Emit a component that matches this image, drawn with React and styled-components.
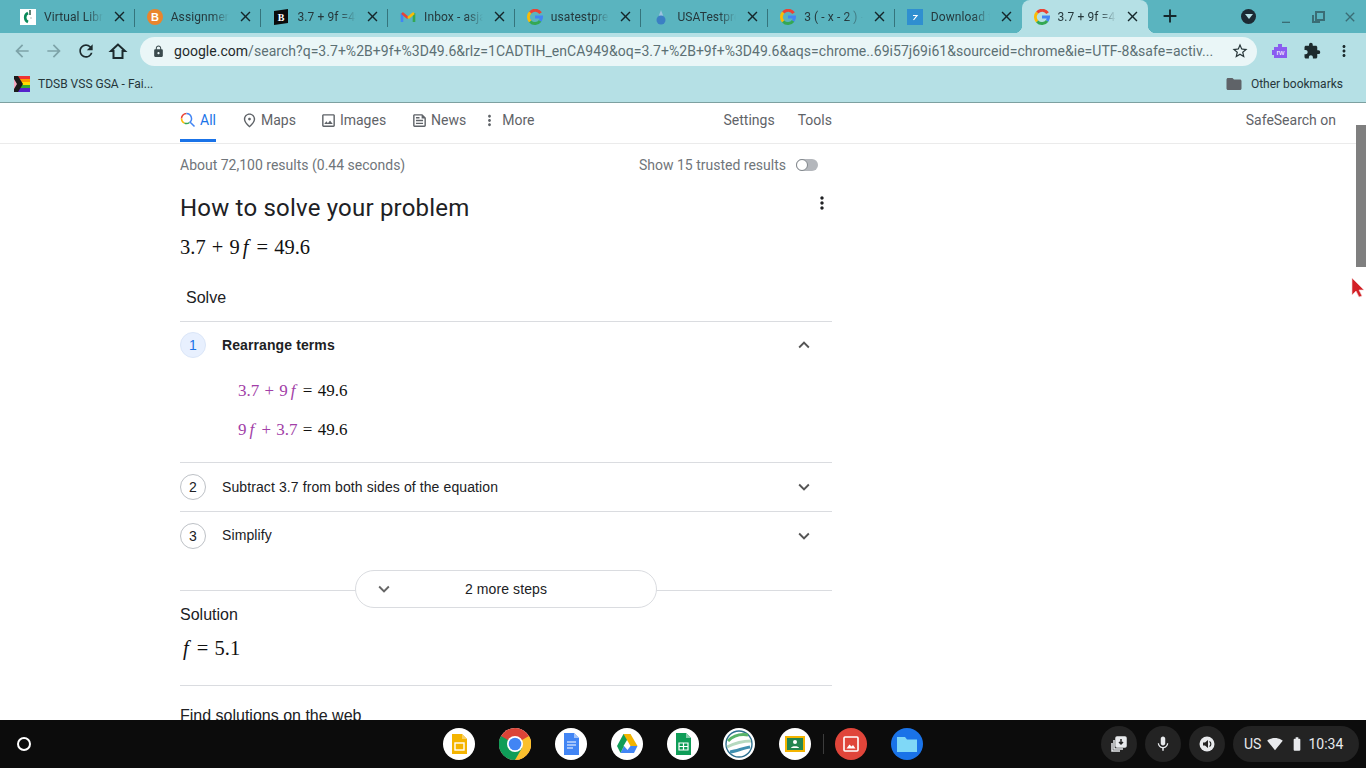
import styled, { createGlobalStyle } from 'styled-components';
import {
  MdArrowBack, MdArrowForward, MdRefresh, MdLock, MdStarBorder, MdExtension, MdMoreVert,
  MdFolder, MdClose, MdAdd, MdKeyboardArrowDown, MdKeyboardArrowUp, MdOutlinePlace,
  MdOutlineImage, MdOutlineFeed, MdMic, MdSignalWifi4Bar, MdBatteryStd, MdMinimize,
} from 'react-icons/md';

const GlobalStyle = createGlobalStyle`
  html, body { margin: 0; padding: 0; height: 100%; overflow: hidden; background: #fff; }
  body { font-family: Roboto, "Liberation Sans", sans-serif; }
`;

const Screen = styled.div`
  position: relative;
  display: flex;
  flex-direction: column;
  width: 1366px;
  height: 768px;
  overflow: hidden;
`;

/* ---- tab strip ---- */
const TabStrip = styled.div`
  display: flex;
  align-items: stretch;
  height: 33px;
  padding-left: 8px;
  background: #5ab4bf;
  flex: none;
`;
const Tab = styled.div`
  position: relative;
  display: flex;
  align-items: center;
  box-sizing: border-box;
  width: 126.7px;
  padding: 0 7px 0 12px;
  gap: 8px;
  color: #25383c;
  ${(p) => !p.$active && !p.$last && `
    &::after {
      content: '';
      position: absolute;
      right: 0;
      top: 9px;
      width: 1px;
      height: 18px;
      background: #35747c;
    }
  `}
  ${(p) => p.$active && `
    background: #b5e0e5;
    border-radius: 8px 8px 0 0;
    &::before, &::after {
      content: '';
      position: absolute;
      bottom: 0;
      width: 8px;
      height: 8px;
    }
    &::before { left: -8px; background: radial-gradient(circle at 0 0, transparent 8px, #b5e0e5 8.5px); }
    &::after { right: -8px; background: radial-gradient(circle at 100% 0, transparent 8px, #b5e0e5 8.5px); }
  `}
`;
const Favicon = styled.span`
  display: flex;
  width: 16px;
  height: 16px;
  flex: none;
`;
const TabTitle = styled.span`
  flex: 1;
  overflow: hidden;
  white-space: nowrap;
  font-size: 12px;
  letter-spacing: 0.1px;
  -webkit-mask-image: linear-gradient(90deg, #000 72%, transparent 100%);
  mask-image: linear-gradient(90deg, #000 72%, transparent 100%);
`;
const TabClose = styled(MdClose)`
  flex: none;
  width: 17px;
  height: 17px;
  color: #15272b;
`;
const NewTab = styled(MdAdd)`
  width: 22px;
  height: 22px;
  margin: 5px 0 0 11px;
  color: #15272b;
`;
const WindowControls = styled.div`
  display: flex;
  align-items: center;
  margin-left: auto;
  padding-right: 8px;
  gap: 16px;
  color: #3a6d75;
`;
const ProfileDot = styled.span`
  display: flex;
  align-items: center;
  justify-content: center;
  width: 15px;
  height: 15px;
  margin-right: 6px;
  border-radius: 50%;
  background: #1c2a33;
`;
const ProfileArrow = styled.span`
  width: 0;
  height: 0;
  border-left: 4px solid transparent;
  border-right: 4px solid transparent;
  border-top: 5px solid #b5e0e5;
`;

/* ---- toolbar ---- */
const Toolbar = styled.div`
  display: flex;
  align-items: center;
  height: 36px;
  padding-left: 12px;
  background: #b5e0e5;
  flex: none;
`;
const NavIcon = styled.span`
  display: flex;
  justify-content: center;
  width: 20px;
  margin-right: 12px;
  font-size: 20px;
  color: ${(p) => (p.$off ? '#7da3a8' : '#1c2a2d')};
`;
const AddressBar = styled.div`
  display: flex;
  align-items: center;
  box-sizing: border-box;
  width: 1117px;
  height: 29px;
  padding: 0 8px 0 12px;
  border-radius: 15px;
  background: #eaf6f7;
`;
const Url = styled.span`
  flex: 1;
  margin-left: 9px;
  overflow: hidden;
  white-space: nowrap;
  font-size: 14px;
  letter-spacing: 0.03px;
  color: #5c7074;
  b { font-weight: 400; color: #1f2a2c; }
`;
const ExtIcons = styled.div`
  display: flex;
  align-items: center;
  margin-left: 14px;
  gap: 14px;
  font-size: 18px;
  color: #1c2a2d;
`;
const ExtBadge = styled.span`
  display: flex;
  width: 18px;
  height: 18px;
`;

/* ---- bookmarks ---- */
const Bookmarks = styled.div`
  display: flex;
  align-items: center;
  justify-content: space-between;
  box-sizing: border-box;
  height: 34px;
  padding: 0 23px 4px 14px;
  background: #b5e0e5;
  border-bottom: 1px solid #7da0a0;
  font-size: 12px;
  color: #26363a;
  flex: none;
`;
const Bookmark = styled.span`
  display: flex;
  align-items: center;
  gap: 8px;
`;

/* ---- page ---- */
const Viewport = styled.div`
  display: flex;
  flex: 1;
  min-height: 0;
  background: #fff;
`;
const Page = styled.div`
  flex: 1;
  min-width: 0;
  overflow: hidden;
`;
const Scrollbar = styled.div`
  width: 10px;
  padding-top: 22px;
  flex: none;
`;
const Thumb = styled.div`
  height: 142px;
  background: #7f7f7f;
`;
const SearchNav = styled.div`
  display: flex;
  align-items: center;
  box-sizing: border-box;
  height: 41px;
  padding: 0 20px 6px 180px;
  border-bottom: 1px solid #ebebeb;
  font-size: 14px;
  color: #5f6368;
`;
const NavTab = styled.span`
  position: relative;
  display: flex;
  align-items: center;
  gap: ${(p) => p.$gap || 4}px;
  margin-right: ${(p) => p.$mr || 0}px;
  ${(p) => p.$push && 'margin-left: auto;'}
  color: ${(p) => (p.$active ? '#1a73e8' : '#5f6368')};
  svg { font-size: 17px; }
  ${(p) => p.$active && `
    &::after {
      content: '';
      position: absolute;
      left: 0;
      right: 0;
      bottom: -14px;
      height: 3px;
      background: #1a73e8;
    }
  `}
`;
const Column = styled.div`
  box-sizing: border-box;
  width: 652px;
  margin-left: 180px;
`;
const StatsRow = styled.div`
  display: flex;
  align-items: center;
  justify-content: space-between;
  box-sizing: border-box;
  height: 43px;
  padding: 0 14px 2px 0;
  font-size: 14px;
  color: #70757a;
`;
const Trusted = styled.span`
  display: flex;
  align-items: center;
  gap: 10px;
`;
const Toggle = styled.span`
  position: relative;
  width: 22px;
  height: 12px;
  border-radius: 6px;
  background: #b4b7bc;
  &::after {
    content: '';
    position: absolute;
    left: 0;
    top: 0;
    box-sizing: border-box;
    width: 12px;
    height: 12px;
    border-radius: 50%;
    border: 1px solid #80868b;
    background: #fff;
  }
`;
const TitleRow = styled.div`
  display: flex;
  align-items: flex-start;
  justify-content: space-between;
  height: 43px;
`;
const Title = styled.h2`
  margin: 0;
  padding-top: 6px;
  font-size: 24px;
  line-height: 30px;
  font-weight: 400;
  letter-spacing: 0.2px;
  color: #202124;
`;
const KebabIcon = styled(MdMoreVert)`
  width: 20px;
  height: 20px;
  margin: 6px 0 0;
  color: #202124;
`;
const Math = styled.div`
  display: flex;
  align-items: center;
  height: ${(p) => p.$h || 34}px;
  font-family: "Liberation Serif", "Times New Roman", serif;
  font-size: ${(p) => p.$size || 20.5}px;
  word-spacing: 1px;
  color: #111;
  white-space: pre;
  i { padding: 0 2px 0 3px; }
`;
const Hi = styled.span`
  color: #a23fa8;
`;
const SolveHead = styled.div`
  display: flex;
  align-items: center;
  box-sizing: border-box;
  height: 38px;
  margin: 14px 0 5px;
  padding: 2px 0 0 6px;
  font-family: "Liberation Sans", Arial, sans-serif;
  font-size: 16px;
  color: #202124;
`;
const Step = styled.div`
  display: flex;
  align-items: center;
  box-sizing: content-box;
  height: ${(p) => p.$h}px;
  border-top: 1px solid #dadce0;
  padding-right: 17px;
  font-family: "Liberation Sans", Arial, sans-serif;
  font-size: 14px;
  letter-spacing: 0.1px;
  color: #202124;
`;
const StepNum = styled.span`
  display: flex;
  align-items: center;
  justify-content: center;
  box-sizing: border-box;
  width: 26px;
  height: 26px;
  margin-right: 16px;
  border-radius: 50%;
  border: 1px solid ${(p) => (p.$open ? '#dbe6f8' : '#bdc1c6')};
  background: ${(p) => (p.$open ? '#e8f0fe' : '#fff')};
  color: ${(p) => (p.$open ? '#1a73e8' : '#202124')};
`;
const StepText = styled.span`
  flex: 1;
  padding-bottom: 1px;
  font-weight: ${(p) => (p.$open ? 700 : 400)};
`;
const Chevron = styled.span`
  display: flex;
  font-size: 22px;
  color: #555;
`;
const StepBody = styled.div`
  padding: 3px 0 13px 58px;
`;
const MoreSteps = styled.div`
  display: flex;
  align-items: flex-start;
  justify-content: center;
  height: 31px;
  margin-top: 11px;
  background: linear-gradient(#dadce0, #dadce0) 0 20px / 100% 1px no-repeat;
`;
const MorePill = styled.div`
  position: relative;
  display: flex;
  align-items: center;
  justify-content: center;
  box-sizing: border-box;
  flex: none;
  width: 302px;
  height: 38px;
  border: 1px solid #dadce0;
  border-radius: 19px;
  background: #fff;
  font-family: "Liberation Sans", Arial, sans-serif;
  font-size: 14px;
  letter-spacing: 0.1px;
  color: #202124;
`;
const PillChevron = styled(MdKeyboardArrowDown)`
  position: absolute;
  left: 17px;
  top: 7px;
  width: 22px;
  height: 22px;
  color: #666;
`;
const SectionLabel = styled.div`
  display: flex;
  align-items: center;
  box-sizing: border-box;
  height: ${(p) => p.$h}px;
  padding-top: 2px;
  font-family: "Liberation Sans", Arial, sans-serif;
  font-size: 16px;
  color: #202124;
`;
const Rule = styled.div`
  height: 1px;
  margin-top: ${(p) => p.$mt || 0}px;
  background: #dadce0;
`;

/* ---- shelf ---- */
const Shelf = styled.div`
  display: grid;
  grid-template-columns: 1fr auto 1fr;
  align-items: center;
  height: 48px;
  background: #0c0c0c;
  flex: none;
`;
const Launcher = styled.span`
  display: block;
  box-sizing: border-box;
  width: 14px;
  height: 14px;
  margin-left: 17px;
  border: 2px solid #fff;
  border-radius: 50%;
`;
const Apps = styled.div`
  display: flex;
  align-items: center;
  gap: 24px;
`;
const AppSlot = styled.div`
  position: relative;
  width: 32px;
  height: 32px;
  border-radius: 50%;
  background: ${(p) => p.$bg || '#fff'};
  ${(p) => p.$run && `
    &::after {
      content: '';
      position: absolute;
      left: 50%;
      bottom: -11px;
      width: ${p.$run === 'on' ? 10 : 6}px;
      height: 2px;
      margin-left: -${p.$run === 'on' ? 5 : 3}px;
      background: ${p.$run === 'on' ? '#fff' : '#9aa0a6'};
    }
  `}
  svg { display: block; width: 32px; height: 32px; }
`;
const ShelfDivider = styled.span`
  width: 1px;
  height: 20px;
  margin: 0 -12.5px;
  background: #3c3c3c;
`;
const Tray = styled.div`
  display: flex;
  align-items: center;
  justify-content: flex-end;
  gap: 8px;
  padding-right: 7px;
`;
const TrayButton = styled.span`
  display: flex;
  align-items: center;
  justify-content: center;
  width: 36px;
  height: 36px;
  border-radius: 50%;
  background: #232323;
  color: #e8eaed;
  font-size: 18px;
`;
const StatusPill = styled.span`
  display: flex;
  align-items: center;
  box-sizing: border-box;
  width: 126px;
  height: 36px;
  padding-left: 11px;
  gap: 6px;
  border-radius: 18px;
  background: #232323;
  color: #e8eaed;
  font-size: 14px;
  svg { font-size: 16px; flex: none; }
`;
const Clock = styled.span`
  margin-left: -3px;
`;
const Pointer = styled.svg`
  position: absolute;
  left: 1351px;
  top: 278px;
  width: 14px;
  height: 20px;
`;

const GoogleG = () => (
  <svg viewBox="0 0 16 16" width="16" height="16" fill="none" strokeWidth="3">
    <path d="M13.6 4.2A6.5 6.5 0 0 0 3.2 3.6" stroke="#ea4335" />
    <path d="M3.2 3.6a6.500 6.500 0 0 0 0 8.8" stroke="#fbbc05" />
    <path d="M3.2 12.400a6.500 6.500 0 0 0 10 -0.600" stroke="#34a853" />
    <path d="M13.200 11.800a6.500 6.500 0 0 0 1.300 -3.800H8" stroke="#4285f4" />
  </svg>
);

const tabs = [
  {
    title: 'Virtual Library',
    icon: (
      <svg viewBox="0 0 16 16" width="16" height="16" fill="none">
        <rect width="16" height="16" fill="#fff" />
        <path d="M8 4a5 5 0 0 0 0 9" stroke="#0a8a5a" strokeWidth="2.600" />
        <path d="M10 1v5" stroke="#1d4f3c" strokeWidth="1.400" />
        <circle cx="11" cy="9" r="1" fill="#c9d6d0" />
      </svg>
    ),
  },
  {
    title: 'Assignments',
    icon: (
      <svg viewBox="0 0 16 16" width="16" height="16">
        <circle cx="8" cy="8" r="8" fill="#e9852d" />
        <text x="8" y="12" fontSize="11" fontWeight="700" textAnchor="middle" fill="#fff" fontFamily="Liberation Sans">B</text>
      </svg>
    ),
  },
  {
    title: '3.7 + 9f =49.6',
    icon: (
      <svg viewBox="0 0 16 16" width="16" height="16">
        <path d="M1 2l14-2v14L1 16z" fill="#0b0b0b" />
        <text x="8" y="12" fontSize="10" fontWeight="700" textAnchor="middle" fill="#fff" fontFamily="Liberation Serif">B</text>
      </svg>
    ),
  },
  {
    title: 'Inbox - asjad',
    icon: (
      <svg viewBox="0 0 16 16" width="16" height="16" fill="none" strokeWidth="2.600">
        <path d="M2 13V4" stroke="#4285f4" />
        <path d="M14 13V4" stroke="#34a853" />
        <path d="M2 4l6 5" stroke="#ea4335" />
        <path d="M8 9l6-5" stroke="#fbbc05" />
      </svg>
    ),
  },
  { title: 'usatestprep', icon: <GoogleG /> },
  {
    title: 'USATestprep',
    icon: (
      <svg viewBox="0 0 16 16" width="16" height="16">
        <path d="M8 1c1 3 2 4 2 6H6c0-2 1-3 2-6z" fill="#9cc3df" />
        <circle cx="8" cy="11" r="4.500" fill="#3b7fc4" />
      </svg>
    ),
  },
  { title: '3 ( - x - 2 ) - 4', icon: <GoogleG /> },
  {
    title: 'Download file',
    icon: (
      <svg viewBox="0 0 16 16" width="16" height="16">
        <rect width="16" height="16" fill="#2f8fd0" />
        <path d="M6 6.500h4L6.500 11" fill="none" stroke="#fff" strokeWidth="1.200" />
      </svg>
    ),
  },
  { title: '3.7 + 9f =49.6', icon: <GoogleG />, active: true },
];

const SearchGlyph = () => (
  <svg viewBox="0 0 16 16" width="16" height="16" fill="none" strokeWidth="1.500">
    <path d="M6.500 1.500a5 5 0 0 0-5 5" stroke="#ea4335" />
    <path d="M1.500 6.500a5 5 0 0 0 3 4.600" stroke="#fbbc05" />
    <path d="M4.500 11.100a5 5 0 0 0 5-.600" stroke="#34a853" />
    <path d="M9.500 10.500a5 5 0 0 0-3-9M10 10l4.500 4.500" stroke="#4285f4" />
  </svg>
);

const RestoreGlyph = () => (
  <svg viewBox="0 0 16 16" width="16" height="16" fill="none" stroke="currentColor" strokeWidth="2">
    <path d="M6 3h8v8H6z" />
    <path d="M3 6v7h7" />
  </svg>
);

const HomeGlyph = () => (
  <svg viewBox="0 0 20 20" width="20" height="20" fill="none" stroke="currentColor" strokeWidth="2">
    <path d="M10 3.500L3 10h2.500v7h9v-7H17z" />
  </svg>
);

const PrideGlyph = () => (
  <svg viewBox="0 0 16 16" width="16" height="16">
    <rect y="0" width="16" height="3" fill="#e33" />
    <rect y="3" width="16" height="3" fill="#f90" />
    <rect y="6" width="16" height="3" fill="#fd0" />
    <rect y="9" width="16" height="3" fill="#3a3" />
    <rect y="12" width="16" height="4" fill="#52c" />
    <path d="M0 0h4l5 8-5 8H0z" fill="#1b1b1b" />
    <path d="M0 3l3 5-3 5z" fill="#f4a9c0" />
  </svg>
);

const SlidesIcon = () => (
  <svg viewBox="0 0 32 32">
    <path d="M9 6h10l5 5v15H9z" fill="#f4b400" />
    <path d="M19 6l5 5h-5z" fill="#f7cf66" />
    <rect x="12" y="15" width="9" height="7" fill="none" stroke="#fff" strokeWidth="1.400" />
  </svg>
);
const ChromeIcon = () => (
  <svg viewBox="0 0 32 32">
    <circle cx="16" cy="16" r="16" fill="#db4437" />
    <path d="M16 32A16 16 0 0 0 30 8l-14 8z" fill="#fbc02d" />
    <path d="M2 8a16 16 0 0 0 14 24l7-12-7-4z" fill="#0f9d58" />
    <circle cx="16" cy="16" r="8" fill="#fff" />
    <circle cx="16" cy="16" r="6.300" fill="#4285f4" />
  </svg>
);
const DocsIcon = () => (
  <svg viewBox="0 0 32 32">
    <path d="M9 5h10l5 5v17H9z" fill="#4285f4" />
    <path d="M19 5l5 5h-5z" fill="#a1c2fa" />
    <path d="M12 14h9M12 17h9M12 20h6" stroke="#fff" strokeWidth="1.200" />
  </svg>
);
const DriveIcon = () => (
  <svg viewBox="0 0 32 32">
    <path d="M12.500 6h7l-7 12H6z" fill="#0f9d58" />
    <path d="M12.500 6h7l7 12h-7z" fill="#f4b400" />
    <path d="M9.500 25l3.500-7h13.500l-3.500 7z" fill="#4285f4" />
    <path d="M6 18h7l-3.500 7z" fill="#0f9d58" />
    <path d="M13 18h6.500l-3 4z" fill="#fff" />
  </svg>
);
const SheetsIcon = () => (
  <svg viewBox="0 0 32 32">
    <path d="M9 5h10l5 5v17H9z" fill="#0f9d58" />
    <path d="M19 5l5 5h-5z" fill="#87ceac" />
    <path d="M12 15h9v7h-9zM12 18.500h9M16.500 15v7" fill="none" stroke="#fff" strokeWidth="1.200" />
  </svg>
);
const GlobeIcon = () => (
  <svg viewBox="0 0 32 32" fill="none">
    <circle cx="16" cy="16" r="13" stroke="#2d6f8f" strokeWidth="1.400" />
    <path d="M5 13c6-6 14-7 20-6" stroke="#58b368" strokeWidth="3" />
    <path d="M4 19c8-4 15-6 24-6" stroke="#b5d9bf" strokeWidth="3" />
    <path d="M7 24c7-1 13-4 20-5" stroke="#3f8fb0" strokeWidth="3" />
  </svg>
);
const ClassroomIcon = () => (
  <svg viewBox="0 0 32 32">
    <rect x="6" y="8" width="20" height="16" fill="#f4b400" />
    <rect x="8" y="10" width="16" height="12" fill="#23854f" />
    <circle cx="16" cy="14" r="2" fill="#fff" />
    <path d="M12 20c0-2.500 8-2.500 8 0z" fill="#fff" />
  </svg>
);
const GalleryIcon = () => (
  <svg viewBox="0 0 32 32">
    <rect x="9" y="9" width="14" height="14" rx="1" fill="none" stroke="#fff" strokeWidth="1.600" />
    <path d="M11.500 20.500l3-4 2 2 1.500-1.500 2.500 3.500z" fill="#fff" />
  </svg>
);
const FilesIcon = () => (
  <svg viewBox="0 0 32 32">
    <path d="M6 9h8l2 2.500h10V24H6z" fill="#7fd8f7" />
  </svg>
);

const apps = [
  { icon: <SlidesIcon /> },
  { icon: <ChromeIcon />, run: 'on' },
  { icon: <DocsIcon /> },
  { icon: <DriveIcon /> },
  { icon: <SheetsIcon /> },
  { icon: <GlobeIcon /> },
  { icon: <ClassroomIcon /> },
];

export default function App() {
  return (
    <Screen>
      <GlobalStyle />
      <TabStrip>
        {tabs.map((t, i) => (
          <Tab key={i} $active={t.active} $last={i === 7}>
            <Favicon>{t.icon}</Favicon>
            <TabTitle>{t.title}</TabTitle>
            <TabClose />
          </Tab>
        ))}
        <NewTab />
        <WindowControls>
          <ProfileDot><ProfileArrow /></ProfileDot>
          <MdMinimize size={16} />
          <RestoreGlyph />
          <MdClose size={16} />
        </WindowControls>
      </TabStrip>

      <Toolbar>
        <NavIcon $off><MdArrowBack /></NavIcon>
        <NavIcon $off><MdArrowForward /></NavIcon>
        <NavIcon><MdRefresh /></NavIcon>
        <NavIcon><HomeGlyph /></NavIcon>
        <AddressBar>
          <MdLock size={13} color="#3a4a4d" />
          <Url>
            <b>google.com</b>/search?q=3.7+%2B+9f+%3D49.6&amp;rlz=1CADTIH_enCA949&amp;oq=3.7+%2B+9f+%3D49.6&amp;aqs=chrome..69i57j69i61&amp;sourceid=chrome&amp;ie=UTF-8&amp;safe=activ...
          </Url>
          <MdStarBorder size={18} color="#263538" />
        </AddressBar>
        <ExtIcons>
          <ExtBadge>
            <svg viewBox="0 0 18 18" width="18" height="18">
              <path d="M3 5h4V2h4v3h5v11H3v-3H1V8h2z" fill="#8a5cf0" />
              <text x="9.500" y="13" fontSize="7.500" textAnchor="middle" fill="#fff" fontFamily="Liberation Sans">rw</text>
            </svg>
          </ExtBadge>
          <MdExtension />
          <MdMoreVert />
        </ExtIcons>
      </Toolbar>

      <Bookmarks>
        <Bookmark><PrideGlyph />TDSB VSS GSA - Fai...</Bookmark>
        <Bookmark><MdFolder size={18} color="#5f6368" />Other bookmarks</Bookmark>
      </Bookmarks>

      <Viewport>
        <Page>
          <SearchNav>
            <NavTab $active $gap={4} $mr={25}><SearchGlyph />All</NavTab>
            <NavTab $gap={3} $mr={24}><MdOutlinePlace />Maps</NavTab>
            <NavTab $gap={3} $mr={25}><MdOutlineImage />Images</NavTab>
            <NavTab $gap={3} $mr={15}><MdOutlineFeed />News</NavTab>
            <NavTab $gap={0} $mr={189}><MdMoreVert />More</NavTab>
            <NavTab $mr={23}>Settings</NavTab>
            <NavTab>Tools</NavTab>
            <NavTab $push>SafeSearch on</NavTab>
          </SearchNav>
          <Column>
            <StatsRow>
              About 72,100 results (0.44 seconds)
              <Trusted>Show 15 trusted results <Toggle /></Trusted>
            </StatsRow>
            <TitleRow>
              <Title>How to solve your problem</Title>
              <KebabIcon />
            </TitleRow>
            <Math>3.7 + 9<i>f</i> = 49.6</Math>
            <SolveHead>Solve</SolveHead>
            <Step $h={46}>
              <StepNum $open>1</StepNum>
              <StepText $open>Rearrange terms</StepText>
              <Chevron><MdKeyboardArrowUp /></Chevron>
            </Step>
            <StepBody>
              <Math $h={39} $size={17}><Hi>3.7 + 9<i>f</i></Hi> = 49.6</Math>
              <Math $h={39} $size={17}><Hi>9<i>f</i> + 3.7</Hi> = 49.6</Math>
            </StepBody>
            <Step $h={48}>
              <StepNum>2</StepNum>
              <StepText>Subtract 3.7 from both sides of the equation</StepText>
              <Chevron><MdKeyboardArrowDown /></Chevron>
            </Step>
            <Step $h={47}>
              <StepNum>3</StepNum>
              <StepText>Simplify</StepText>
              <Chevron><MdKeyboardArrowDown /></Chevron>
            </Step>
            <MoreSteps>
              <MorePill><PillChevron />2 more steps</MorePill>
            </MoreSteps>
            <SectionLabel $h={26}>Solution</SectionLabel>
            <Math $h={42}><i>f</i> = 5.1</Math>
            <Rule $mt={16} />
            <SectionLabel $h={58}>Find solutions on the web</SectionLabel>
          </Column>
        </Page>
        <Scrollbar><Thumb /></Scrollbar>
      </Viewport>

      <Shelf>
        <Launcher />
        <Apps>
          {apps.map((a, i) => (
            <AppSlot key={i} $run={a.run}>{a.icon}</AppSlot>
          ))}
          <ShelfDivider />
          <AppSlot $bg="#e0453a" $run="dim"><GalleryIcon /></AppSlot>
          <AppSlot $bg="#1a73e8" $run="dim"><FilesIcon /></AppSlot>
        </Apps>
        <Tray>
          <TrayButton>
            <svg viewBox="0 0 18 18" width="18" height="18" fill="none" stroke="#e8eaed" strokeWidth="1.500">
              <rect x="6" y="2" width="10" height="10" rx="1" fill="#e8eaed" />
              <path d="M11 4v5M9 7l2 2 2-2" stroke="#232323" />
              <path d="M4 5v9h9M2 8v8h8" />
            </svg>
          </TrayButton>
          <TrayButton><MdMic /></TrayButton>
          <TrayButton>
            <svg viewBox="0 0 18 18" width="18" height="18">
              <circle cx="9" cy="9" r="7.500" fill="#e8eaed" />
              <path d="M5 7.500h2l3-2.500v8l-3-2.500H5z" fill="#232323" />
              <path d="M11.500 6.500a3 3 0 0 1 0 5" fill="none" stroke="#232323" strokeWidth="1.200" />
            </svg>
          </TrayButton>
          <StatusPill>US<MdSignalWifi4Bar /><MdBatteryStd /><Clock>10:34</Clock></StatusPill>
        </Tray>
      </Shelf>

      <Pointer viewBox="0 0 14 20">
        <path d="M1 0l12 12H8l3 6-3 1-3-6-4 4z" fill="#d32026" stroke="#f3d9d9" strokeWidth="0.600" />
      </Pointer>
    </Screen>
  );
}
